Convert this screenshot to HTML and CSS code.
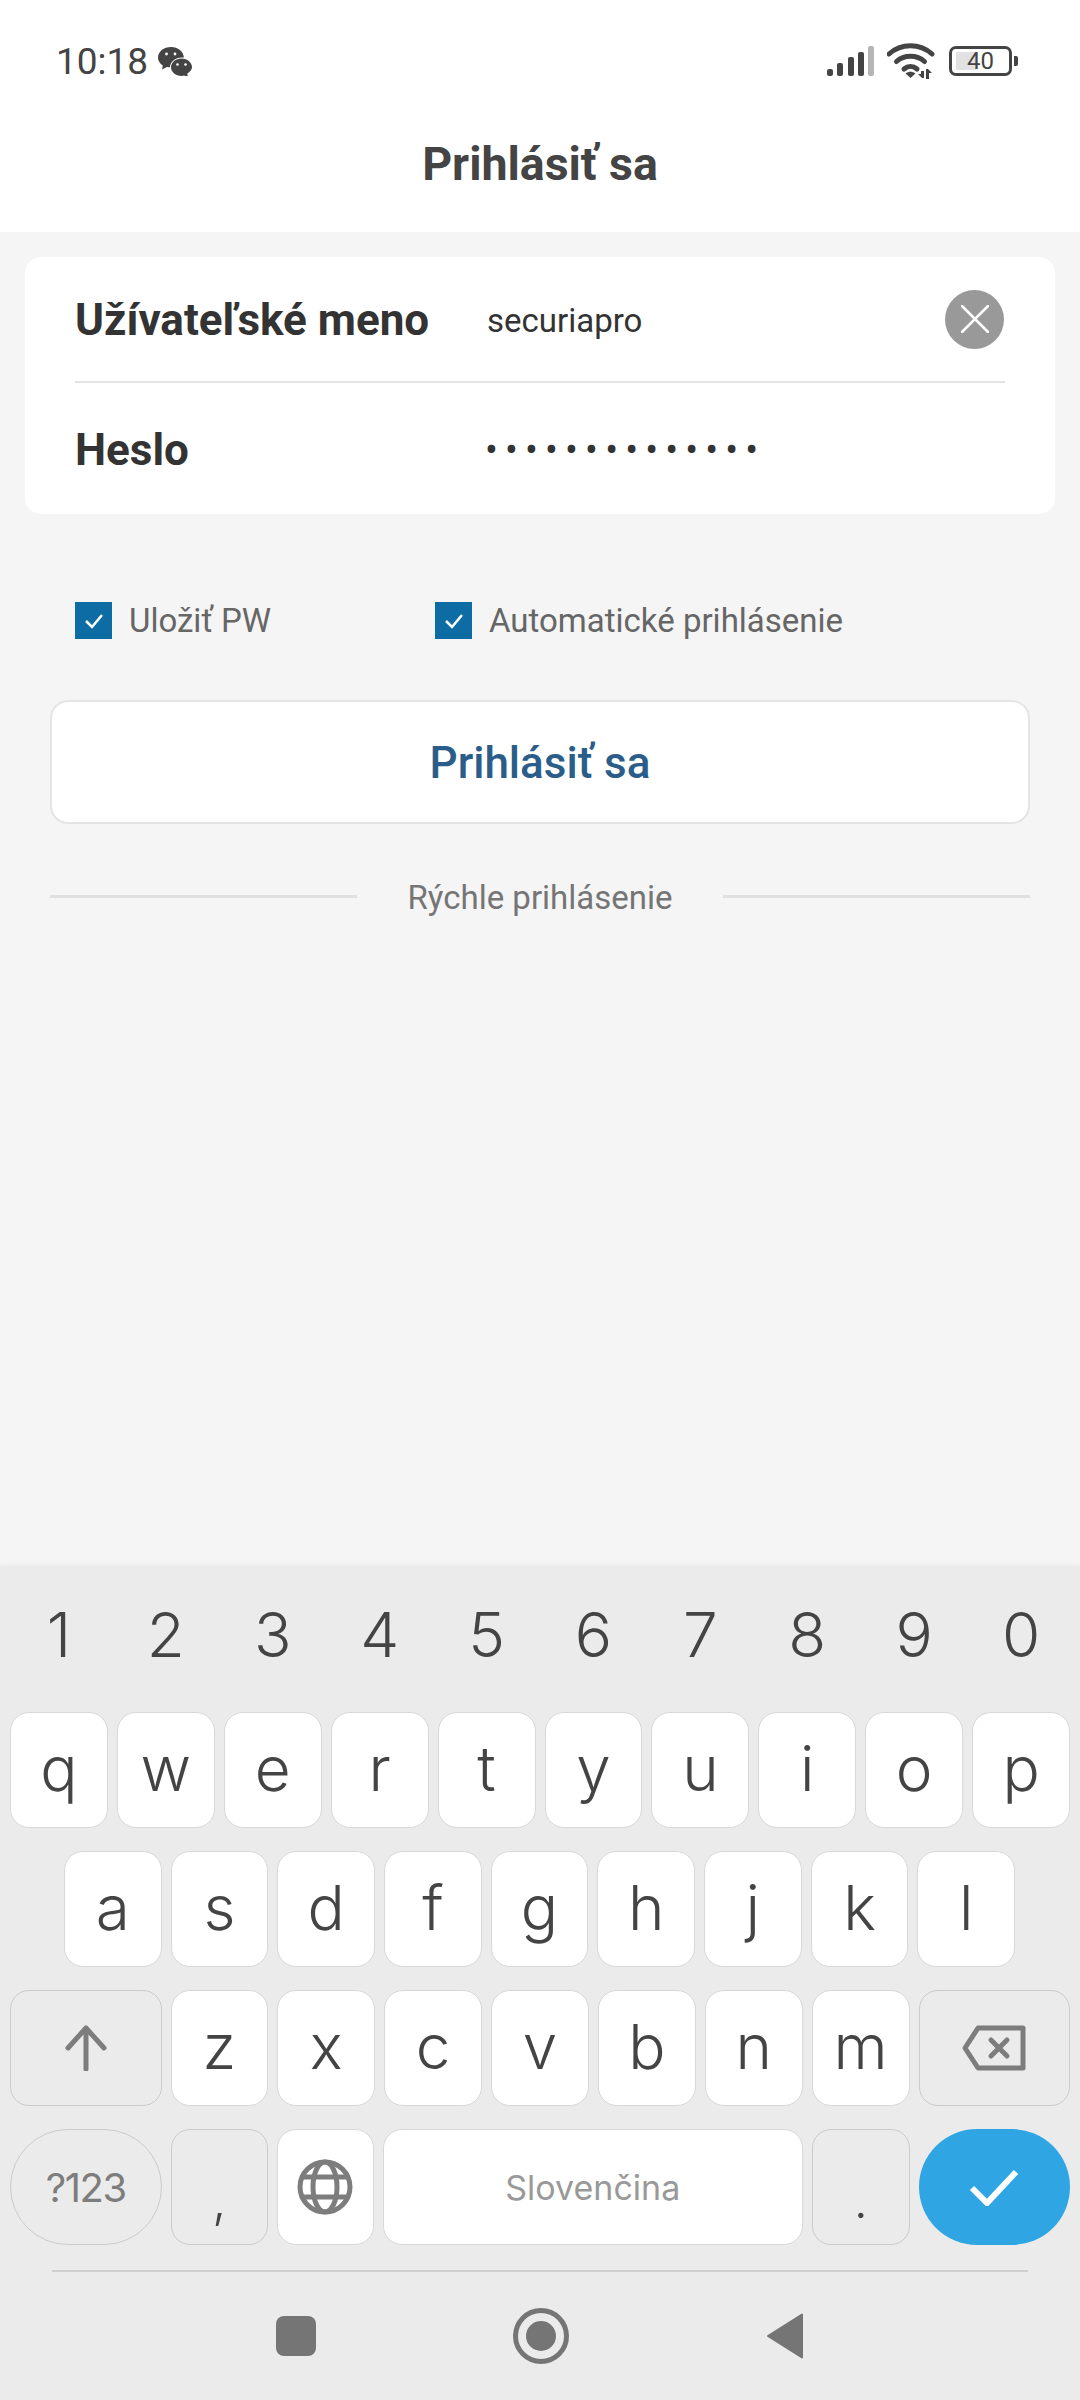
FILE: index.html
```html
<!DOCTYPE html>
<html>
<head>
    <title>Prihlásiť sa</title>
    <meta name="viewport" content="width=device-width, initial-scale=1">
    <link rel="stylesheet" href="styles.css">
</head>
<body>
<div id="page">
    <header id="top">
        <div class="status">
            <div class="status-left">
                <span class="clock">10:18</span>
                <svg class="wechat" width="36" height="30" viewBox="0 0 36 30">
                    <path d="M14 1C6.8 1 1 5.7 1 11.5c0 3.3 1.9 6.2 4.8 8.1L5 23.6l5-2.6c1 .2 1.9.3 3 .3 0-5.5 5-9.8 12-9.9.6 0 1.300 0 1.900.1C26.500 5.600 21 1 14 1z" fill="#444"/>
                    <circle cx="9.500" cy="8" r="1.400" fill="#fff"/>
                    <circle cx="18" cy="8" r="1.400" fill="#fff"/>
                    <path d="M24.500 12.500c-5.800 0-10.500 4-10.500 8.800s4.700 8.700 10.500 8.700c1 0 1.800-.1 2.700-.4l3.800 1.400-.8-3.300c2.700-1.600 4.800-3.800 4.800-6.400 0-4.800-4.700-8.800-10.500-8.800z" fill="#444"/>
                    <circle cx="20.500" cy="18.500" r="1.300" fill="#fff"/>
                    <circle cx="28.500" cy="18.500" r="1.300" fill="#fff"/>
                </svg>
            </div>
            <div class="status-right">
                <svg width="49" height="32" viewBox="0 0 49 32">
                    <rect x="1" y="24" width="6" height="7" rx="2" fill="#444"/>
                    <rect x="11" y="18" width="6" height="13" rx="2" fill="#444"/>
                    <rect x="22" y="12" width="6" height="19" rx="2" fill="#444"/>
                    <rect x="32" y="7" width="6" height="24" rx="2" fill="#444"/>
                    <rect x="42" y="1" width="6" height="30" rx="2" fill="#b5b5b5"/>
                </svg>
                <svg width="50" height="36" viewBox="0 0 50 36">
                    <path d="M2 11C14 0 33 0 45 11" fill="none" stroke="#444" stroke-width="5" stroke-linecap="round"/>
                    <path d="M9.500 18.500C17 11.500 30 11.500 37.500 18.500" fill="none" stroke="#444" stroke-width="5" stroke-linecap="round"/>
                    <path d="M17 26c4-3.500 9-3.500 13 0" fill="none" stroke="#444" stroke-width="5" stroke-linecap="round"/>
                    <path d="M23.500 35l-5-4.500c3-2.500 7-2.500 10 0z" fill="#444"/>
                    <path d="M34 28h3v7h-2l-4-4h3zM39 26h2l4 4h-3v6h-3z" fill="#444"/>
                </svg>
                <div class="battery-wrap">
                    <div class="battery">40</div>
                    <div class="battery-nub"></div>
                </div>
            </div>
        </div>
        <h1 class="title">Prihlásiť sa</h1>
    </header>

    <main id="content">
        <section class="card">
            <div class="field field-user">
                <span class="field-label">Užívateľské meno</span>
                <span class="field-value">securiapro</span>
                <span class="clear">
                    <svg width="28" height="28" viewBox="0 0 28 28">
                        <path d="M1 1l26 26M27 1L1 27" stroke="#fff" stroke-width="2.500" stroke-linecap="round"/>
                    </svg>
                </span>
            </div>
            <div class="field field-pass">
                <span class="field-label">Heslo</span>
                <span class="field-dots">••••••••••••••</span>
            </div>
        </section>

        <div class="options">
            <label class="option option-save">
                <span class="checkbox">
                    <svg width="22" height="18" viewBox="0 0 22 18">
                        <path d="M3 9l6 6L19 3" fill="none" stroke="#fff" stroke-width="2.500"/>
                    </svg>
                </span>
                Uložiť PW
            </label>
            <label class="option">
                <span class="checkbox">
                    <svg width="22" height="18" viewBox="0 0 22 18">
                        <path d="M3 9l6 6L19 3" fill="none" stroke="#fff" stroke-width="2.500"/>
                    </svg>
                </span>
                Automatické prihlásenie
            </label>
        </div>

        <button class="login">Prihlásiť sa</button>

        <div class="quick">
            <span class="quick-line"></span>
            <span class="quick-text">Rýchle prihlásenie</span>
            <span class="quick-line"></span>
        </div>
    </main>

    <section id="keyboard">
        <div class="digits">
            <span>1</span><span>2</span><span>3</span><span>4</span><span>5</span><span>6</span><span>7</span><span>8</span><span>9</span><span>0</span>
        </div>
        <div class="kb-row">
            <span class="key">q</span><span class="key">w</span><span class="key">e</span><span class="key">r</span><span class="key">t</span><span class="key">y</span><span class="key">u</span><span class="key">i</span><span class="key">o</span><span class="key">p</span>
        </div>
        <div class="kb-row kb-row-mid">
            <span class="key">a</span><span class="key">s</span><span class="key">d</span><span class="key">f</span><span class="key">g</span><span class="key">h</span><span class="key">j</span><span class="key">k</span><span class="key">l</span>
        </div>
        <div class="kb-row">
            <span class="key key-wide key-grey key-icon">
                <svg width="42" height="46" viewBox="0 0 42 46">
                    <path d="M21 44V3M3 23L21 3l18 20" fill="none" stroke="#7d7d7d" stroke-width="5" stroke-linecap="round" stroke-linejoin="round"/>
                </svg>
            </span>
            <span class="key">z</span><span class="key">x</span><span class="key">c</span><span class="key">v</span><span class="key">b</span><span class="key">n</span><span class="key">m</span>
            <span class="key key-wide key-grey key-icon">
                <svg width="64" height="46" viewBox="0 0 64 46">
                    <path d="M16 3h45v40H16L3 23z" fill="none" stroke="#7d7d7d" stroke-width="5" stroke-linejoin="round"/>
                    <path d="M29 15l16 16M45 15L29 31" fill="none" stroke="#7d7d7d" stroke-width="5" stroke-linecap="round"/>
                </svg>
            </span>
        </div>
        <div class="kb-row">
            <span class="key key-wide key-grey key-round key-sym">?123</span>
            <span class="key key-grey key-low">,</span>
            <span class="key key-icon key-globe">
                <svg width="56" height="56" viewBox="0 0 56 56">
                    <g fill="none" stroke="#7d7d7d" stroke-width="5">
                        <circle cx="28" cy="28" r="25"/>
                        <ellipse cx="28" cy="28" rx="12" ry="25"/>
                        <path d="M5 18h46M5 38h46"/>
                    </g>
                </svg>
            </span>
            <span class="key key-space">Slovenčina</span>
            <span class="key key-grey key-low">.</span>
            <span class="key key-wide key-enter key-icon">
                <svg width="50" height="38" viewBox="0 0 50 38">
                    <path d="M3 20l15 15L47 4" fill="none" stroke="#fff" stroke-width="6"/>
                </svg>
            </span>
        </div>
        <div class="kb-divider"></div>
        <nav class="navbar">
            <span class="nav-recent"></span>
            <span class="nav-home"><span class="nav-home-dot"></span></span>
            <svg width="38" height="46" viewBox="0 0 38 46">
                <path d="M36 1.500v43L2 23z" fill="#757575" stroke="#757575" stroke-width="2" stroke-linejoin="round"/>
            </svg>
        </nav>
    </section>
</div>
</body>
</html>
```

FILE: styles.css
```css
html, body {
    margin: 0;
    padding: 0;
}

body {
    font-family: Roboto, "Noto Sans", sans-serif;
    color: #444;
}

#page {
    width: 1080px;
    height: 2400px;
    display: flex;
    flex-direction: column;
    overflow: hidden;
    background: #f5f5f5;
}

/* top bar */
#top {
    height: 232px;
    background: #fff;
}

.status {
    height: 122px;
    box-sizing: border-box;
    padding: 0 62px 0 56px;
    display: flex;
    align-items: center;
    justify-content: space-between;
}

.status-left, .status-right {
    display: flex;
    align-items: center;
}

.clock {
    font-size: 37px;
}

.wechat {
    margin-left: 9px;
}

.status-right {
    gap: 12px;
}

.battery-wrap {
    display: flex;
    align-items: center;
    gap: 2px;
}

.battery {
    width: 63px;
    height: 30px;
    box-sizing: border-box;
    border: 3px solid #444;
    border-radius: 7px;
    background: linear-gradient(#e2e2e2, #e2e2e2) no-repeat 4px center / 20px 18px;
    font-size: 24px;
    line-height: 24px;
    text-align: center;
}

.battery-nub {
    width: 4px;
    height: 10px;
    background: #444;
    border-radius: 0 2px 2px 0;
}

.title {
    margin: 0;
    font-size: 46.500px;
    font-weight: 700;
    line-height: 84px;
    text-align: center;
}

/* form */
#content {
    flex: 1;
    display: flex;
    flex-direction: column;
    padding-top: 25px;
}

.card {
    margin: 0 25px;
    padding: 0 50px;
    background: #fff;
    border-radius: 16px;
}

.field {
    display: flex;
    align-items: center;
    color: #333;
}

.field-user {
    height: 124px;
    border-bottom: 2px solid #e4e4e4;
}

.field-pass {
    height: 131px;
}

.field-label {
    width: 412px;
    padding-top: 2px;
    font-size: 44px;
    font-weight: 700;
}

.field-value {
    flex: 1;
    padding-top: 2px;
    font-size: 33px;
}

.field-dots {
    margin-left: -2px;
    padding-top: 2px;
    font-size: 38px;
    letter-spacing: 7.200px;
}

.clear {
    width: 59px;
    height: 59px;
    margin-right: 1px;
    border-radius: 50%;
    background: #999;
    display: flex;
    align-items: center;
    justify-content: center;
}

.options {
    display: flex;
    margin: 87px 0 0 75px;
    font-size: 33px;
    color: #666;
}

.option {
    display: flex;
    align-items: center;
    gap: 17px;
}

.option-save {
    width: 360px;
}

.checkbox {
    width: 37px;
    height: 37px;
    background: #0e6ca5;
    display: flex;
    align-items: center;
    justify-content: center;
}

.login {
    margin: 60px 50px 0;
    height: 124px;
    padding-top: 3px;
    background: #fff;
    border: 2px solid #e4e4e4;
    border-radius: 18px;
    font-family: inherit;
    font-size: 44px;
    font-weight: 500;
    color: #2a5d8a;
}

.quick {
    display: flex;
    align-items: center;
    gap: 50px;
    margin: 51px 50px 0;
    font-size: 33px;
    color: #757575;
}

.quick-text {
    padding-top: 3px;
}

.quick-line {
    flex: 1;
    height: 3px;
    background: #e0e0e0;
}

/* keyboard */
#keyboard {
    height: 834px;
    background: #ebebeb;
    box-shadow: 0 -2px 3px rgba(0, 0, 0, 0.03);
    font-family: Inter, Roboto, sans-serif;
    color: #444;
    display: flex;
    flex-direction: column;
}

.digits {
    height: 136px;
    padding: 0 10px 10px;
    display: grid;
    grid-template-columns: repeat(10, 1fr);
    column-gap: 9px;
    align-items: center;
    text-align: center;
    font-size: 62px;
    font-weight: 350;
}

.kb-row {
    display: flex;
    gap: 9px;
    height: 116px;
    padding: 0 10px;
    margin-bottom: 23px;
}

.kb-row-mid {
    padding: 0 65px 0 64px;
}

.key {
    flex: 1;
    box-sizing: border-box;
    padding-bottom: 4px;
    background: #fff;
    border: 1.500px solid #d8d8d8;
    border-radius: 19px;
    display: flex;
    align-items: center;
    justify-content: center;
    font-size: 62px;
    font-weight: 350;
}

.key-icon {
    padding-bottom: 0;
}

.key-wide {
    flex: 0 0 151.500px;
}

.key-grey {
    background: #ebebeb;
    border-color: #cbcbcb;
}

.key-round {
    border-radius: 58px;
}

.key-sym {
    padding-bottom: 0;
    font-size: 40px;
    font-weight: 400;
    letter-spacing: -1.500px;
    color: #7d7d7d;
}

.key-low {
    align-items: flex-end;
    padding-bottom: 14px;
    font-size: 50px;
    line-height: 60px;
    flex: 0 0 97.500px;
}

.key-globe {
    flex: 0 0 96.500px;
}

.key-space {
    padding-bottom: 0;
    font-size: 34px;
    font-weight: 400;
    color: #999;
}

.key-enter {
    background: #2fa5e4;
    border: none;
    border-radius: 58px;
}

.kb-divider {
    height: 2px;
    margin: 2px 52px 0;
    background: #cfcfcf;
}

.navbar {
    flex: 1;
    display: flex;
    align-items: center;
    justify-content: center;
    gap: 197px;
}

.nav-recent {
    width: 40px;
    height: 40px;
    border-radius: 8px;
    background: #757575;
}

.nav-home {
    width: 56px;
    height: 56px;
    box-sizing: border-box;
    border: 5px solid #757575;
    border-radius: 50%;
    display: flex;
    align-items: center;
    justify-content: center;
}

.nav-home-dot {
    width: 30px;
    height: 30px;
    border-radius: 50%;
    background: #757575;
}
```
